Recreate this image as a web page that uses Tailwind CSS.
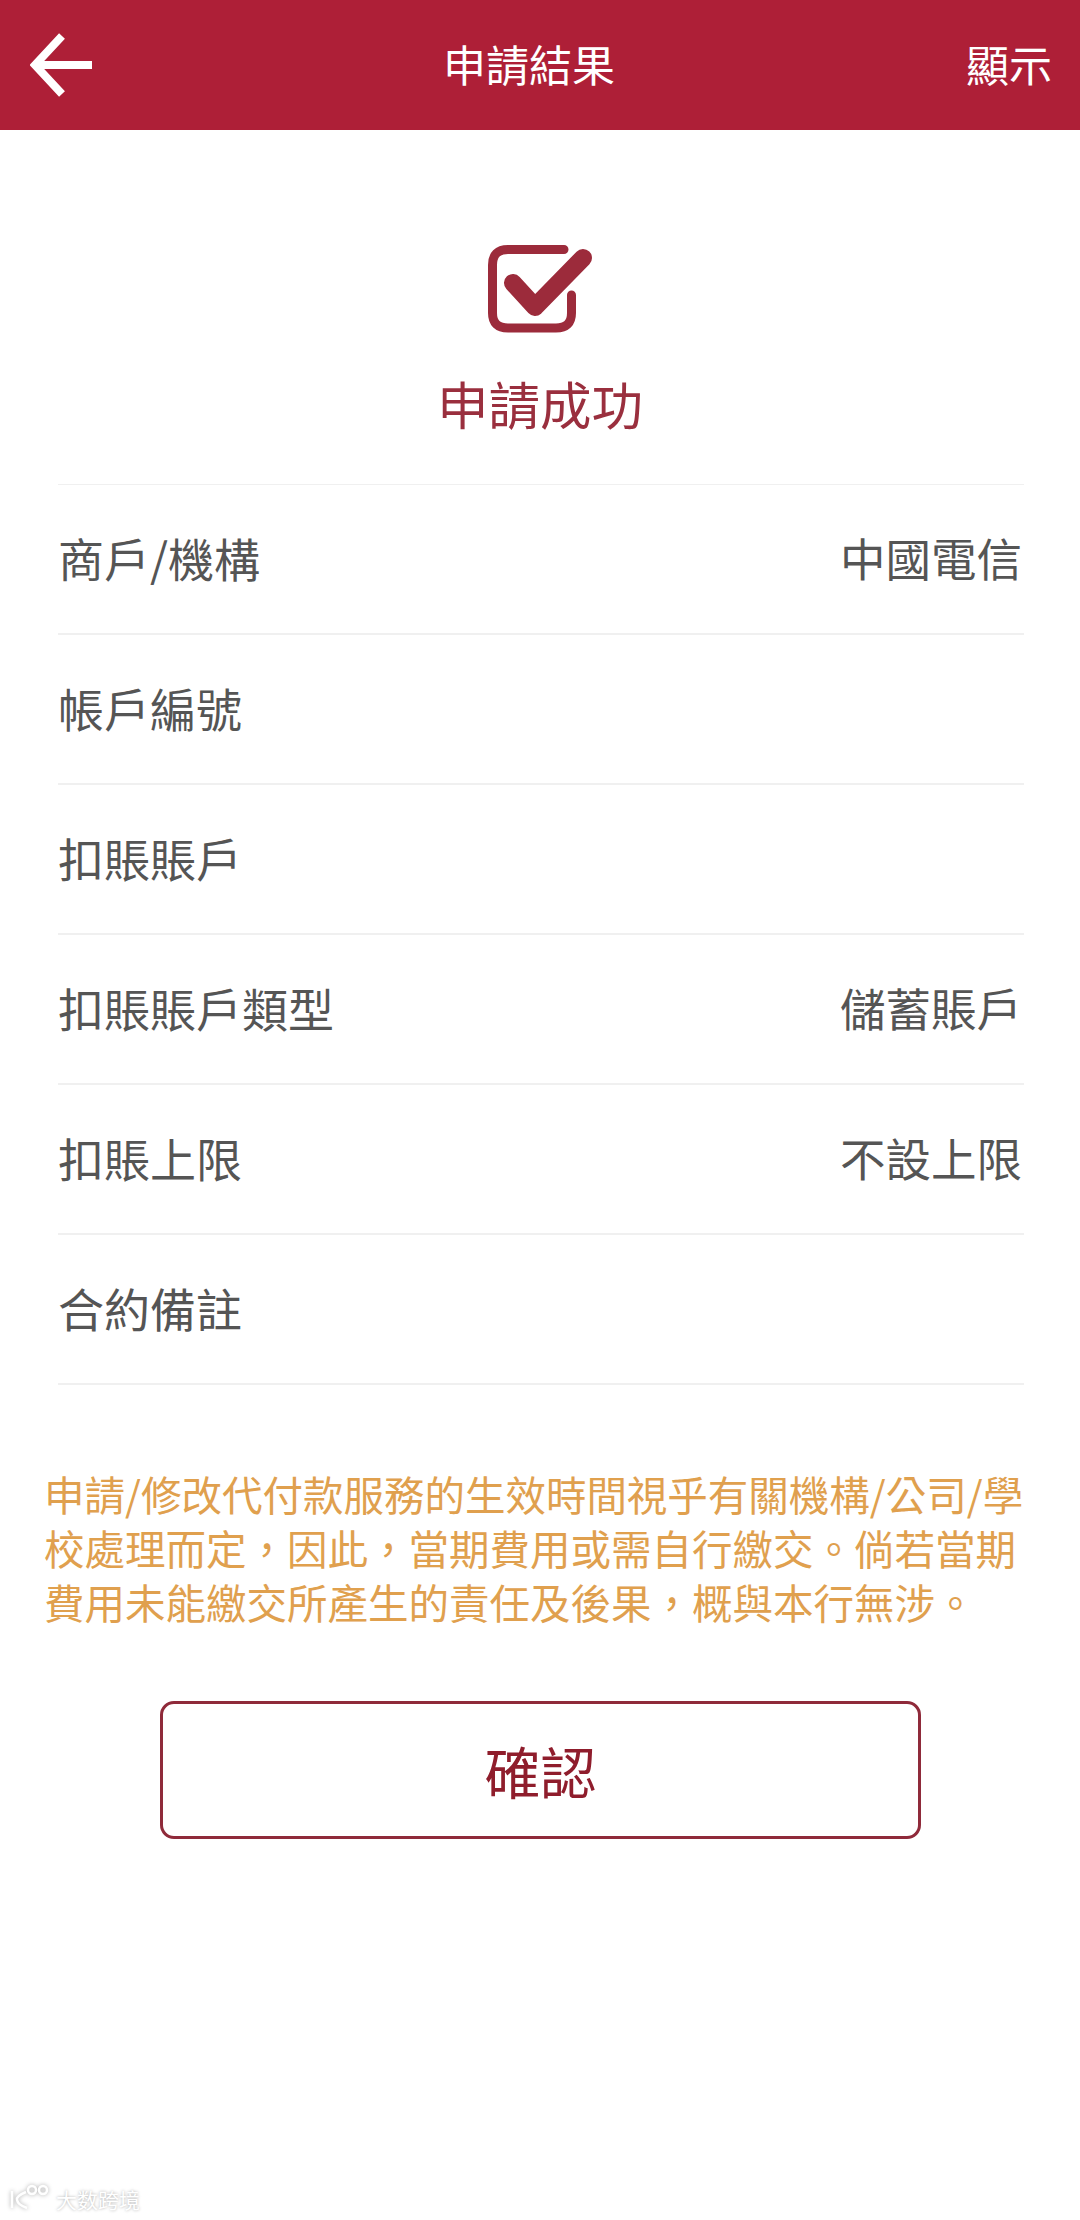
<!DOCTYPE html>
<html lang="zh-Hant">
<head>
  <meta charset="UTF-8">
  <title>申請結果</title>
  <script src="https://cdn.jsdelivr.net/npm/@tailwindcss/browser@4"></script>
</head>
<body class="relative w-[1080px] h-[2220px] overflow-hidden bg-white font-['Noto_Sans_CJK_TC','Noto_Sans',sans-serif]">

  <header class="flex items-center justify-between h-[130px] pl-[30px] pr-[28px] pb-[3px] bg-[#ae1f37] text-white">
    <svg class="w-[62px] h-[64px] mt-[3px]" viewBox="0 0 62 64" fill="none" stroke="#fff" stroke-width="8">
      <path d="M32 3 L5 32 L32 61" />
      <path d="M5 32 H62" />
    </svg>
    <h1 class="text-[43px] leading-none">申請結果</h1>
    <span class="text-[43px] leading-none">顯示</span>
  </header>

  <div class="flex flex-col items-center pt-[115px]">
    <svg class="w-[104px] h-[88px]" viewBox="0 0 104 88" fill="none">
      <path d="M76 4.5 H20 Q4.5 4.5 4.5 20 V68 Q4.5 83 20 83 H68 Q83.5 83 83.5 68 V50" stroke="#9c2b3b" stroke-width="9" stroke-linecap="round" />
      <path d="M25 38 L47 62 L95 13" stroke="#9c2b3b" stroke-width="18" stroke-linecap="round" stroke-linejoin="round" />
    </svg>
    <div class="mt-[34px] text-[51.5px] leading-[72px] text-[#9a2f3e]">申請成功</div>
  </div>

  <dl class="mt-[45px] ml-[58px] mr-[56px] border-t border-[#f0f0f0] text-[#555555]">
    <div class="flex items-center justify-between h-[150px] pb-[3px] border-b-2 border-[#f0f0f0]">
      <dt class="text-[46px]">商戶/機構</dt>
      <dd class="text-[45.5px] pr-[2px]">中國電信</dd>
    </div>
    <div class="flex items-center justify-between h-[150px] pb-[3px] border-b-2 border-[#f0f0f0]">
      <dt class="text-[46px]">帳戶編號</dt>
      <dd class="text-[45.5px] pr-[2px]"></dd>
    </div>
    <div class="flex items-center justify-between h-[150px] pb-[3px] border-b-2 border-[#f0f0f0]">
      <dt class="text-[46px]">扣賬賬戶</dt>
      <dd class="text-[45.5px] pr-[2px]"></dd>
    </div>
    <div class="flex items-center justify-between h-[150px] pb-[3px] border-b-2 border-[#f0f0f0]">
      <dt class="text-[46px]">扣賬賬戶類型</dt>
      <dd class="text-[45.5px] pr-[2px]">儲蓄賬戶</dd>
    </div>
    <div class="flex items-center justify-between h-[150px] pb-[3px] border-b-2 border-[#f0f0f0]">
      <dt class="text-[46px]">扣賬上限</dt>
      <dd class="text-[45.5px] pr-[2px]">不設上限</dd>
    </div>
    <div class="flex items-center justify-between h-[150px] pb-[3px] border-b-2 border-[#f0f0f0]">
      <dt class="text-[46px]">合約備註</dt>
      <dd class="text-[45.5px] pr-[2px]"></dd>
    </div>
  </dl>

  <p class="mt-[82px] pl-[44px] pr-[50px] text-[40.5px] leading-[54px] text-[#e0a04e]">申請/修改代付款服務的生效時間視乎有關機構/公司/學校處理而定<span class="font-['Noto_Sans_CJK_SC']">，</span>因此<span class="font-['Noto_Sans_CJK_SC']">，</span>當期費用或需自行繳交<span class="font-['Noto_Sans_CJK_SC']">。</span>倘若當期費用未能繳交所產生的責任及後果<span class="font-['Noto_Sans_CJK_SC']">，</span>概與本行無涉<span class="font-['Noto_Sans_CJK_SC']">。</span></p>

  <button class="flex items-center justify-center w-[761px] h-[138px] mt-[72px] ml-[160px] border-[3px] border-[#8f2a3a] rounded-[14px] text-[56px] text-[#8f1d2c]">確認</button>

  <div class="absolute left-[10px] top-[2184px] flex items-end gap-[6px] text-white [text-shadow:0_0_3px_#aaaaaa]">
    <svg class="w-[40px] h-[26px] drop-shadow-[0_0_2px_#aaaaaa]" viewBox="0 0 40 26" fill="none" stroke="#fff" stroke-width="2.5">
      <path d="M2 7 V24" />
      <path d="M16 8 Q6 12 7 16 Q8 21 17 24" />
      <circle cx="22" cy="6" r="4" />
      <circle cx="33" cy="6" r="4" />
    </svg>
    <span class="text-[21px] leading-none font-['Noto_Sans_CJK_SC',sans-serif]">大数跨境</span>
  </div>

</body>
</html>
